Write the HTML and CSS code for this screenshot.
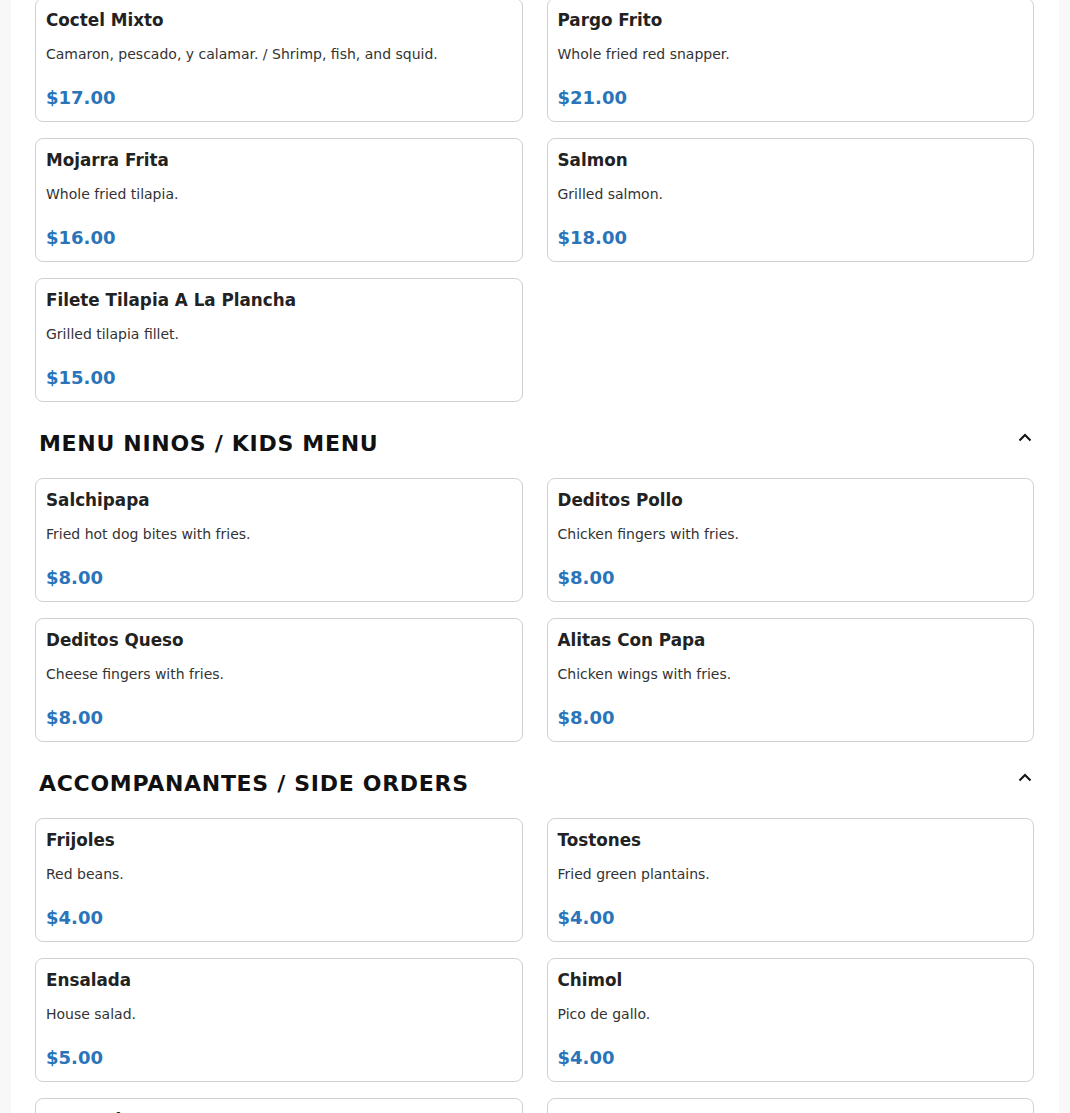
FILE: index.html
```html
<!DOCTYPE html>
<html lang="en">
<head>
<meta charset="utf-8">
<title>Menu</title>
<link rel="stylesheet" href="styles.css">
</head>
<body>
<main class="page">
  <section class="section section-first">
    <div class="grid">
      <div class="card"><h3 class="name">Coctel Mixto</h3><p class="desc">Camaron, pescado, y calamar. / Shrimp, fish, and squid.</p><div class="price">$17.00</div></div>
      <div class="card"><h3 class="name">Pargo Frito</h3><p class="desc">Whole fried red snapper.</p><div class="price">$21.00</div></div>
      <div class="card"><h3 class="name">Mojarra Frita</h3><p class="desc">Whole fried tilapia.</p><div class="price">$16.00</div></div>
      <div class="card"><h3 class="name">Salmon</h3><p class="desc">Grilled salmon.</p><div class="price">$18.00</div></div>
      <div class="card"><h3 class="name">Filete Tilapia A La Plancha</h3><p class="desc">Grilled tilapia fillet.</p><div class="price">$15.00</div></div>
    </div>
  </section>

  <section class="section">
    <div class="section-head">
      <h2 class="section-title">MENU NINOS / KIDS MENU</h2>
      <svg class="chev" width="14" height="9" viewBox="0 0 14 9"><path d="M1.5 7.5 L7 2 L12.5 7.5" fill="none" stroke="#111" stroke-width="2"/></svg>
    </div>
    <div class="grid">
      <div class="card"><h3 class="name">Salchipapa</h3><p class="desc">Fried hot dog bites with fries.</p><div class="price">$8.00</div></div>
      <div class="card"><h3 class="name">Deditos Pollo</h3><p class="desc">Chicken fingers with fries.</p><div class="price">$8.00</div></div>
      <div class="card"><h3 class="name">Deditos Queso</h3><p class="desc">Cheese fingers with fries.</p><div class="price">$8.00</div></div>
      <div class="card"><h3 class="name">Alitas Con Papa</h3><p class="desc">Chicken wings with fries.</p><div class="price">$8.00</div></div>
    </div>
  </section>

  <section class="section">
    <div class="section-head">
      <h2 class="section-title">ACCOMPANANTES / SIDE ORDERS</h2>
      <svg class="chev" width="14" height="9" viewBox="0 0 14 9"><path d="M1.5 7.5 L7 2 L12.5 7.5" fill="none" stroke="#111" stroke-width="2"/></svg>
    </div>
    <div class="grid">
      <div class="card"><h3 class="name">Frijoles</h3><p class="desc">Red beans.</p><div class="price">$4.00</div></div>
      <div class="card"><h3 class="name">Tostones</h3><p class="desc">Fried green plantains.</p><div class="price">$4.00</div></div>
      <div class="card"><h3 class="name">Ensalada</h3><p class="desc">House salad.</p><div class="price">$5.00</div></div>
      <div class="card"><h3 class="name">Chimol</h3><p class="desc">Pico de gallo.</p><div class="price">$4.00</div></div>
      <div class="card"><h3 class="name">Arroz Blanco</h3><p class="desc">White rice.</p><div class="price">$4.00</div></div>
      <div class="card"><h3 class="name">Huevo</h3><p class="desc">Fried egg.</p><div class="price">$3.00</div></div>
    </div>
  </section>
</main>
</body>
</html>
```
FILE: styles.css
```css
html, body {
  margin: 0;
  padding: 0;
  background: #f8f8f8;
  font-family: "DejaVu Sans", Verdana, sans-serif;
  color: #222;
  overflow: hidden;
}

.page {
  width: 1048px;
  margin: 0 auto;
  background: #fff;
  padding: 0 25px 40px 24px;
  box-sizing: border-box;
  min-height: 1200px;
}

.section-first {
  margin-top: -2px;
}

.grid {
  display: grid;
  grid-template-columns: 1fr 1fr;
  column-gap: 24px;
  row-gap: 16px;
}

.card {
  border: 1px solid #d0d0d0;
  border-radius: 8px;
  padding: 11px 10px 10px;
  height: 124px;
  box-sizing: border-box;
}

.name {
  margin: 0;
  font-size: 16.8px;
  line-height: 20px;
  font-weight: bold;
  color: #222;
}

.desc {
  margin: 16px 0 0;
  font-size: 14px;
  line-height: 17px;
  color: #333;
}

.price {
  margin-top: 24px;
  font-size: 18px;
  line-height: 22px;
  font-weight: bold;
  color: #2a74b9;
}

.section-head {
  display: flex;
  align-items: center;
  justify-content: space-between;
  padding: 0 0 0 4px;
  margin: 29px 0 21px;
  height: 26px;
}

.section-title {
  margin: 0;
  font-size: 22px;
  line-height: 26px;
  letter-spacing: 0.7px;
  font-weight: bold;
  color: #111;
}

.chev {
  margin-right: 2px;
  margin-top: -13px;
}
```
